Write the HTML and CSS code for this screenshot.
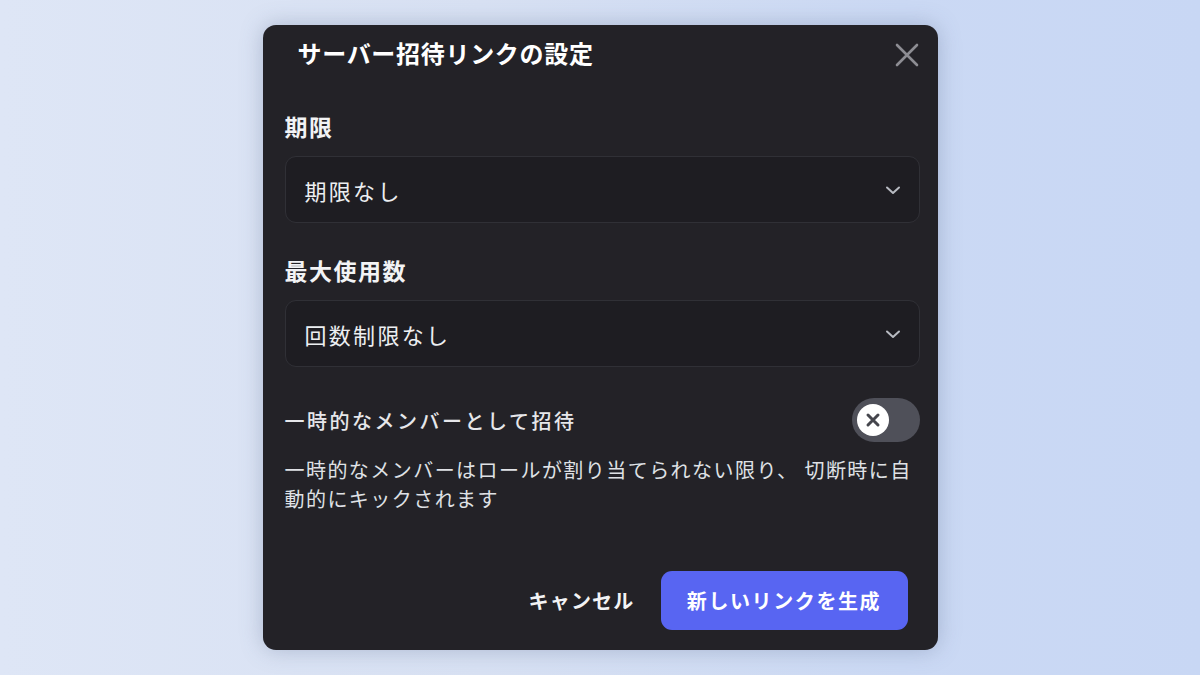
FILE: index.html
```html
<!DOCTYPE html>
<html lang="ja">
<head>
<meta charset="utf-8">
<title>サーバー招待リンクの設定</title>
<link rel="stylesheet" href="styles.css">
</head>
<body>
<div class="stage">
  <div class="modal">
    <header class="modal-header">
      <h1 class="modal-title">サーバー招待リンクの設定</h1>
      <button class="close-btn" aria-label="閉じる">
        <svg width="24" height="24" viewBox="0 0 24 24"><path d="M2 2 L22 22 M22 2 L2 22" stroke="currentColor" stroke-width="2.6" stroke-linecap="round" fill="none"/></svg>
      </button>
    </header>

    <div class="field">
      <div class="field-label">期限</div>
      <div class="select">
        <span class="select-value">期限なし</span>
        <svg class="chevron" width="18" height="12" viewBox="0 0 18 12"><path d="M3 3.5 L9 9 L15 3.5" stroke="currentColor" stroke-width="2" stroke-linecap="round" stroke-linejoin="round" fill="none"/></svg>
      </div>
    </div>

    <div class="field">
      <div class="field-label">最大使用数</div>
      <div class="select">
        <span class="select-value">回数制限なし</span>
        <svg class="chevron" width="18" height="12" viewBox="0 0 18 12"><path d="M3 3.5 L9 9 L15 3.5" stroke="currentColor" stroke-width="2" stroke-linecap="round" stroke-linejoin="round" fill="none"/></svg>
      </div>
    </div>

    <div class="toggle-row">
      <span class="toggle-label">一時的なメンバーとして招待</span>
      <div class="toggle">
        <div class="knob">
          <svg width="16" height="16" viewBox="0 0 16 16"><path d="M3 3 L13 13 M13 3 L3 13" stroke="#45464d" stroke-width="3" stroke-linecap="round" fill="none"/></svg>
        </div>
      </div>
    </div>

    <p class="description">一時的なメンバーはロールが割り当てられない限り、 切断時に自<br>動的にキックされます</p>

    <footer class="modal-footer">
      <button class="btn-cancel">キャンセル</button>
      <button class="btn-primary">新しいリンクを生成</button>
    </footer>
  </div>
</div>
</body>
</html>
```

FILE: styles.css
```css
* { box-sizing: border-box; }

html, body {
  margin: 0;
  height: 100%;
}

body {
  font-family: "Noto Sans CJK JP", "Noto Sans", sans-serif;
  background: linear-gradient(90deg, #dee6f6 0%, #d8e1f3 40%, #cbd9f4 75%, #c8d7f4 100%);
}

.stage {
  height: 675px;
  display: flex;
  align-items: center;
  justify-content: center;
}

.modal {
  width: 675px;
  height: 625px;
  background: #232227;
  border-radius: 13px;
  box-shadow: 0 0 22px rgba(90, 105, 140, 0.35);
  display: flex;
  flex-direction: column;
  padding: 13px 18px 20px 22px;
  color: #f2f3f5;
}

.modal-header {
  display: flex;
  align-items: center;
  justify-content: space-between;
  height: 30px;
  margin-bottom: 44px;
}

.modal-title {
  margin: 0 0 0 13px;
  font-size: 24px;
  font-weight: 700;
  letter-spacing: 0.7px;
  line-height: 30px;
  color: #ffffff;
}

.close-btn {
  background: none;
  border: 0;
  padding: 0;
  margin-right: 1px;
  margin-top: 3px;
  color: #8d8d93;
  display: flex;
  width: 24px;
  height: 24px;
}

.field {
  display: flex;
  flex-direction: column;
  margin-bottom: 33px;
}

.field-label {
  font-size: 23px;
  font-weight: 700;
  letter-spacing: 1.5px;
  line-height: 28px;
  margin-bottom: 16px;
  color: #f2f3f5;
}

.select {
  height: 67px;
  border-radius: 11px;
  background: #1e1d22;
  border: 1px solid #303036;
  display: flex;
  align-items: center;
  justify-content: space-between;
  padding: 0 17px 0 19px;
}

.select-value {
  font-size: 22px;
  letter-spacing: 2.3px;
  color: #eceef1;
}

.chevron {
  color: #b8bbc2;
}

.toggle-row {
  display: flex;
  align-items: center;
  justify-content: space-between;
  height: 44px;
  margin-top: -2px;
  margin-bottom: 13px;
}

.toggle-label {
  font-size: 20px;
  font-weight: 500;
  letter-spacing: 2.5px;
  color: #e6e7ea;
}

.toggle {
  width: 68px;
  height: 44px;
  border-radius: 22px;
  background: #4f5059;
  display: flex;
  align-items: center;
  padding-left: 5px;
}

.knob {
  width: 32px;
  height: 32px;
  border-radius: 50%;
  background: #ffffff;
  display: flex;
  align-items: center;
  justify-content: center;
}

.description {
  margin: 0;
  font-size: 20px;
  line-height: 29px;
  letter-spacing: 1.45px;
  color: #dfe1e5;
}

.modal-footer {
  margin-top: auto;
  display: flex;
  justify-content: flex-end;
  align-items: center;
  padding-right: 12px;
}

.btn-cancel {
  background: none;
  border: 0;
  padding: 0;
  font-family: inherit;
  font-size: 20px;
  font-weight: 700;
  letter-spacing: 1.2px;
  color: #f2f3f5;
  margin-right: 26px;
}

.btn-primary {
  width: 247px;
  height: 59px;
  border: 0;
  border-radius: 11px;
  background: #5865f2;
  font-family: inherit;
  font-size: 20px;
  font-weight: 700;
  letter-spacing: 1.6px;
  color: #ffffff;
}
```
